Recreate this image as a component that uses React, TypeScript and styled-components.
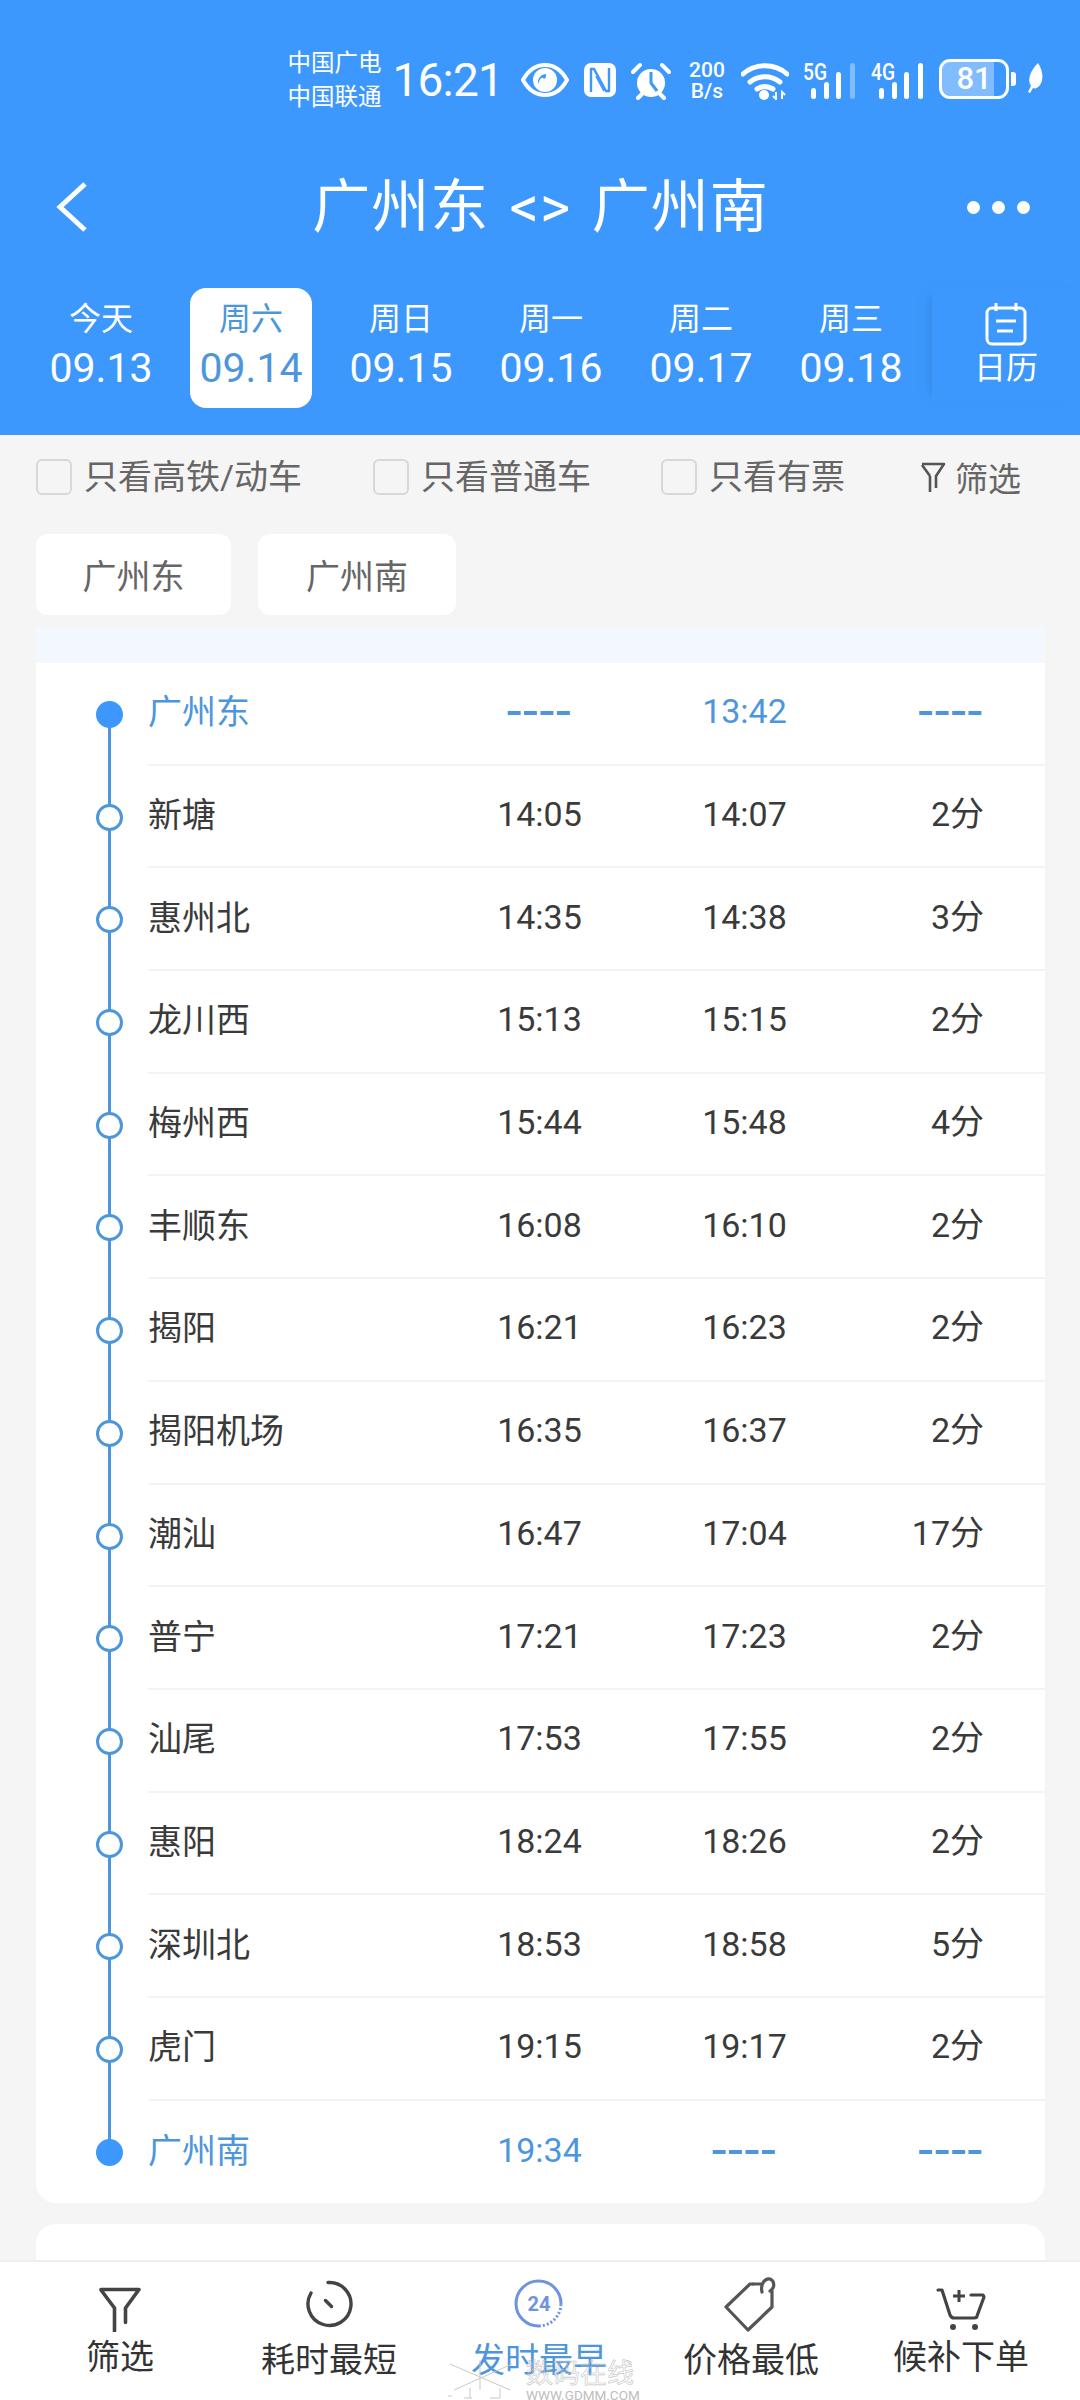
import React from "react";
import styled, { createGlobalStyle } from "styled-components";

const FONT = `Roboto, "Noto Sans CJK SC", sans-serif`;
const BLUE = "#3d98fd";
const TEXT_BLUE = "#4d96dc";

const GlobalStyle = createGlobalStyle`
  html, body { margin: 0; padding: 0; background: #f5f5f5; }
  body { font-family: ${FONT}; }
`;

const days = [
  { label: "今天", date: "09.13" },
  { label: "周六", date: "09.14", active: true },
  { label: "周日", date: "09.15" },
  { label: "周一", date: "09.16" },
  { label: "周二", date: "09.17" },
  { label: "周三", date: "09.18" },
];

const stops = [
  ["广州东", "----", "13:42", "----"],
  ["新塘", "14:05", "14:07", "2分"],
  ["惠州北", "14:35", "14:38", "3分"],
  ["龙川西", "15:13", "15:15", "2分"],
  ["梅州西", "15:44", "15:48", "4分"],
  ["丰顺东", "16:08", "16:10", "2分"],
  ["揭阳", "16:21", "16:23", "2分"],
  ["揭阳机场", "16:35", "16:37", "2分"],
  ["潮汕", "16:47", "17:04", "17分"],
  ["普宁", "17:21", "17:23", "2分"],
  ["汕尾", "17:53", "17:55", "2分"],
  ["惠阳", "18:24", "18:26", "2分"],
  ["深圳北", "18:53", "18:58", "5分"],
  ["虎门", "19:15", "19:17", "2分"],
  ["广州南", "19:34", "----", "----"],
];

const EyeIcon = () => (
  <svg width="48" height="36" viewBox="0 0 48 36">
    <path d="M2 18C8 7 16 3 24 3s16 4 22 15c-6 11-14 15-22 15S8 29 2 18z" fill="none" stroke="#fff" strokeWidth="4" />
    <circle cx="24" cy="18" r="12" fill="#fff" />
    <path d="M17 22c2-5 3-7 5-6 2 2 3 0 3-4-4 0-9 4-8 10z" fill={BLUE} />
  </svg>
);

const NfcIcon = () => (
  <svg width="34" height="36" viewBox="0 0 34 36">
    <rect x="1" y="1" width="32" height="34" rx="7" fill="#fff" />
    <path d="M8 30V7h3l12 22h3V6" fill="none" stroke={BLUE} strokeWidth="2.4" />
    <path d="M13 14l8 15" fill="none" stroke={BLUE} strokeWidth="1.6" />
  </svg>
);

const AlarmIcon = () => (
  <svg width="40" height="38" viewBox="0 0 40 38">
    <circle cx="20" cy="21" r="14" fill="#fff" />
    <path d="M20 10v11l6 8" fill="none" stroke={BLUE} strokeWidth="3" />
    <path d="M2 10l7-7M38 10l-7-7M7 36l4-4M33 36l-4-4" stroke="#fff" strokeWidth="4" strokeLinecap="round" />
  </svg>
);

const WifiIcon = () => (
  <svg width="48" height="38" viewBox="0 0 48 38">
    <path d="M2 12C14 1 34 1 46 12M9 20c9-7 21-7 30 0M16 27c5-3 11-3 16 0" fill="none" stroke="#fff" strokeWidth="5" strokeLinecap="round" />
    <circle cx="23" cy="33" r="5" fill="#fff" />
    <path d="M35 30v7l-3-3M41 37v-7l3 3" fill="none" stroke="#fff" strokeWidth="2" />
  </svg>
);

const SignalIcon = ({ net, dim }: { net: string; dim?: boolean }) => (
  <svg width="54" height="38" viewBox="0 0 54 38" overflow="visible">
    <text x="0" y="18" fontSize="24" fontWeight="500" fill="#fff" fontFamily="Roboto, sans-serif" textLength="24" lengthAdjust="spacingAndGlyphs">{net}</text>
    <rect x="8" y="26" width="5" height="11" rx="2.5" fill="#fff" />
    <rect x="21" y="20" width="5" height="17" rx="2.5" fill="#fff" />
    <rect x="33" y="10" width="5" height="27" rx="2.5" fill="#fff" />
    <rect x="47" y="1" width="5" height="36" rx="2.5" fill="#fff" opacity={dim ? 0.35 : 1} />
  </svg>
);

const LeafIcon = () => (
  <svg width="18" height="32" viewBox="0 0 18 32">
    <path d="M12 1c5 8 6 16 2 22-2 3-5 4-7 3l-3 5-2-1 3-6C1 18 4 9 12 1z" fill="#fff" />
  </svg>
);

const BackIcon = () => (
  <svg width="34" height="50" viewBox="0 0 34 50">
    <path d="M30 2L5 25l25 23" fill="none" stroke="#fff" strokeWidth="5" />
  </svg>
);

const CalendarIcon = () => (
  <svg width="44" height="44" viewBox="0 0 44 44">
    <rect x="3" y="6" width="38" height="36" rx="5" fill="none" stroke="#fff" strokeWidth="3" />
    <path d="M12 1v8M32 1v8M12 19h20M13 29h16" stroke="#fff" strokeWidth="3" fill="none" />
  </svg>
);

const FunnelSmall = () => (
  <svg width="26" height="32" viewBox="0 0 26 32">
    <path d="M2 3h22L16 15v12M10 15L2 4M10 15v16" fill="none" stroke="#555" strokeWidth="2.6" strokeLinejoin="round" />
  </svg>
);

const FilterTabIcon = () => (
  <svg width="56" height="56" viewBox="0 0 56 56">
    <path d="M9 13.5h38L33.5 32v14.5M22.5 32L9 14M22.5 32v23" fill="none" stroke="#444" strokeWidth="3.6" strokeLinejoin="round" strokeLinecap="round" />
  </svg>
);

const TimerIcon = () => (
  <svg width="56" height="56" viewBox="0 0 56 56">
    <path d="M27 6.5A21.5 21.5 0 1 1 10 17" fill="none" stroke="#444" strokeWidth="3.4" strokeLinecap="round" />
    <path d="M24.5 24.5l6 6" stroke="#444" strokeWidth="3.4" strokeLinecap="round" />
  </svg>
);

const ClockTabIcon = () => (
  <svg width="56" height="56" viewBox="0 0 56 56">
    <path d="M50 28A22.5 22.5 0 1 0 28 50" fill="none" stroke="#6f93de" strokeWidth="3" />
    <path d="M28 50A22.5 22.5 0 0 0 50 28" fill="none" stroke="#6f93de" strokeWidth="3" strokeDasharray="2 2" />
    <text x="28" y="35" textAnchor="middle" fontSize="20" fontWeight="700" fill="#6f93de" fontFamily="Roboto, sans-serif">24</text>
  </svg>
);

const TagIcon = () => (
  <svg width="56" height="56" viewBox="0 0 56 56">
    <path d="M30 8H27L3 31l22 23 24-23V15" fill="none" stroke="#555" strokeWidth="3.2" strokeLinejoin="round" strokeLinecap="round" />
    <path d="M30 8h9M39 16c-2-8 3-14 8-13 5 2 5 9 0 12" fill="none" stroke="#555" strokeWidth="3.2" strokeLinecap="round" />
  </svg>
);

const CartIcon = () => (
  <svg width="56" height="56" viewBox="0 0 56 56">
    <path d="M5 14h4l8 25c1 2 2 3 4 3h20c2 0 3-1 3-2l7-19-1-2H38" fill="none" stroke="#444" strokeWidth="3.2" strokeLinecap="round" strokeLinejoin="round" />
    <path d="M20 20h12M26 14v12" stroke="#444" strokeWidth="3" />
    <circle cx="20" cy="51" r="3" fill="#444" />
    <circle cx="42" cy="51" r="3" fill="#444" />
  </svg>
);

const WatermarkLogo = () => (
  <svg width="72" height="40" viewBox="0 0 72 40">
    <path d="M4 4l60 26M66 4L8 30M34 0v30M2 36h4M18 38h8M44 38h10M24 28v10M54 28v10" fill="none" stroke="#c9c9c9" strokeWidth="1" />
  </svg>
);

const tabs = [
  { label: "筛选", icon: <FilterTabIcon />, up: true },
  { label: "耗时最短", icon: <TimerIcon /> },
  { label: "发时最早", icon: <ClockTabIcon />, active: true },
  { label: "价格最低", icon: <TagIcon /> },
  { label: "候补下单", icon: <CartIcon />, up: true },
];

export default function App() {
  return (
    <Page>
      <GlobalStyle />
      <Header>
        <StatusBar>
          <Carrier>
            <span>中国广电</span>
            <span>中国联通</span>
          </Carrier>
          <Clock>16:21</Clock>
          <EyeIcon />
          <NfcIcon />
          <AlarmIcon />
          <NetSpeed>
            <span>200</span>
            <span>B/s</span>
          </NetSpeed>
          <WifiIcon />
          <SignalIcon net="5G" dim />
          <SignalIcon net="4G" />
          <Battery>
            <BatteryBody>81</BatteryBody>
            <BatteryNub />
          </Battery>
          <LeafIcon />
        </StatusBar>
        <TitleBar>
          <BackIcon />
          <Title>广州东 &lt;&gt; 广州南</Title>
          <MoreDots>
            <i />
            <i />
            <i />
          </MoreDots>
        </TitleBar>
        <DateStrip>
          {days.map((d) => (
            <DayCell key={d.date}>
              <DayChip $active={d.active}>
                <DayLabel>{d.label}</DayLabel>
                <DayDate>{d.date}</DayDate>
              </DayChip>
            </DayCell>
          ))}
          <CalendarCell>
            <CalendarIcon />
            <DayLabel>日历</DayLabel>
          </CalendarCell>
        </DateStrip>
      </Header>

      <FilterRow>
        <FilterItem $width={337}>
          <CheckBox />
          只看高铁/动车
        </FilterItem>
        <FilterItem $width={288}>
          <CheckBox />
          只看普通车
        </FilterItem>
        <FilterItem $width={259}>
          <CheckBox />
          只看有票
        </FilterItem>
        <FilterLink>
          <FunnelSmall />
          筛选
        </FilterLink>
      </FilterRow>

      <StationTabs>
        <StationTab $width={195}>广州东</StationTab>
        <StationTab $width={198}>广州南</StationTab>
      </StationTabs>

      <StopsCard>
        <CardStrip />
        {stops.map((s, i) => {
          const end = i === 0 || i === stops.length - 1;
          return (
            <StopRow key={s[0]}>
              <Rail $first={i === 0} $last={i === stops.length - 1}>
                <Dot $filled={end} />
              </Rail>
              <StopBody $last={i === stops.length - 1} $end={end}>
                <StopName>{s[0]}</StopName>
                <StopCell $dash={s[1] === "----"}>{s[1]}</StopCell>
                <StopCell $dash={s[2] === "----"}>{s[2]}</StopCell>
                <StayCell $dash={s[3] === "----"}>{s[3]}</StayCell>
              </StopBody>
            </StopRow>
          );
        })}
      </StopsCard>

      <NextCard />

      <BottomBar>
        {tabs.map((t) => (
          <BottomTab key={t.label} $active={t.active} $up={t.up}>
            {t.icon}
            <span>{t.label}</span>
          </BottomTab>
        ))}
        <Watermark>
          <WatermarkLogo />
          <WatermarkText>
            <b>数码在线</b>
            <small>WWW.GDMM.COM</small>
          </WatermarkText>
        </Watermark>
      </BottomBar>
    </Page>
  );
}

const Page = styled.div`
  width: 1080px;
  height: 2400px;
  overflow: hidden;
  background: #f5f5f5;
  font-family: ${FONT};
`;

const Header = styled.header`
  height: 435px;
  background: ${BLUE};
  color: #fff;
  box-sizing: border-box;
`;

const StatusBar = styled.div`
  height: 134px;
  box-sizing: border-box;
  padding: 46px 36px 0 0;
  display: flex;
  justify-content: flex-end;
  align-items: flex-start;
  gap: 14px;
  svg { display: block; margin-top: 16px; }
`;

const Carrier = styled.div`
  display: flex;
  flex-direction: column;
  font-size: 23.5px;
  line-height: 34px;
  margin-right: -3px;
`;

const Clock = styled.div`
  font-size: 46px;
  line-height: 68px;
  font-weight: 400;
  letter-spacing: -0.8px;
  margin-right: 4px;
`;

const NetSpeed = styled.div`
  display: flex;
  flex-direction: column;
  align-items: center;
  font-size: 21px;
  line-height: 21px;
  font-weight: 500;
  margin: 14px 0 0 2px;
  width: 40px;
`;

const Battery = styled.div`
  display: flex;
  align-items: center;
  gap: 2px;
  margin: 13px -4px 0 0;
`;

const BatteryBody = styled.div`
  width: 70px;
  height: 40px;
  box-sizing: border-box;
  border: 3px solid #fff;
  border-radius: 11px;
  font-size: 31px;
  line-height: 34px;
  font-weight: 500;
  text-align: center;
  background: linear-gradient(90deg, rgba(255, 255, 255, 0.35) 81%, transparent 81%);
`;

const BatteryNub = styled.div`
  width: 5px;
  height: 14px;
  border-radius: 0 3px 3px 0;
  background: #fff;
`;

const TitleBar = styled.div`
  height: 146px;
  box-sizing: border-box;
  padding: 0 50px 0 55px;
  display: flex;
  align-items: center;
  justify-content: space-between;
  svg { display: block; }
`;

const Title = styled.h1`
  margin: 0 0 0 25px;
  font-size: 58px;
  font-weight: 400;
  line-height: 70px;
  letter-spacing: 1px;
  word-spacing: 5px;
  white-space: pre;
`;

const MoreDots = styled.div`
  display: flex;
  gap: 12px;
  i {
    width: 13px;
    height: 13px;
    border-radius: 50%;
    background: #fff;
  }
`;

const DateStrip = styled.div`
  height: 120px;
  margin-top: 8px;
  padding-left: 26px;
  display: flex;
`;

const DayCell = styled.div`
  width: 150px;
  flex-shrink: 0;
  display: flex;
  justify-content: center;
`;

const DayChip = styled.div<{ $active?: boolean }>`
  width: 122px;
  height: 120px;
  box-sizing: border-box;
  padding-top: 11px;
  border-radius: 16px;
  display: flex;
  flex-direction: column;
  align-items: center;
  background: ${(p) => (p.$active ? "#fff" : "transparent")};
  color: ${(p) => (p.$active ? "#4d96dc" : "#fff")};
`;

const DayLabel = styled.div`
  font-size: 32px;
  line-height: 40px;
`;

const DayDate = styled.div`
  font-size: 41px;
  font-weight: 450;
  line-height: 52px;
  margin-top: 3px;
`;

const CalendarCell = styled.div`
  width: 148px;
  flex-shrink: 0;
  margin-left: 6px;
  height: 100px;
  display: flex;
  flex-direction: column;
  align-items: center;
  padding-top: 14px;
  box-shadow: -8px 0 10px -8px rgba(40, 110, 200, 0.5);
  svg { display: block; margin-bottom: 2px; }
`;

const FilterRow = styled.div`
  height: 83px;
  box-sizing: border-box;
  padding: 0 0 0 36px;
  display: flex;
  align-items: center;
`;

const FilterItem = styled.div<{ $width: number }>`
  width: ${(p) => p.$width}px;
  display: flex;
  align-items: center;
  gap: 12px;
  font-size: 34px;
  line-height: 44px;
  color: #666;
  flex-shrink: 0;
`;

const CheckBox = styled.span`
  width: 36px;
  height: 36px;
  box-sizing: border-box;
  border: 2px solid #d8d8d8;
  border-radius: 6px;
  flex-shrink: 0;
`;

const FilterLink = styled.div`
  display: flex;
  align-items: center;
  gap: 9px;
  font-size: 33px;
  color: #666;
  svg { display: block; }
`;

const StationTabs = styled.div`
  display: flex;
  gap: 27px;
  padding: 16px 36px 0;
`;

const StationTab = styled.div<{ $width: number }>`
  width: ${(p) => p.$width}px;
  height: 81px;
  background: #fff;
  border-radius: 12px;
  display: flex;
  align-items: center;
  justify-content: center;
  font-size: 34px;
  color: #666;
`;

const StopsCard = styled.section`
  margin: 12px 35px 0 36px;
  background: #fff;
  border-radius: 0 0 20px 20px;
  overflow: hidden;
`;

const CardStrip = styled.div`
  height: 36px;
  background: #f3f8fe;
`;

const StopRow = styled.div`
  height: 102.7px;
  display: flex;
`;

const Rail = styled.div<{ $first?: boolean; $last?: boolean }>`
  width: 112px;
  flex-shrink: 0;
  position: relative;
  &::before {
    content: "";
    position: absolute;
    left: 71.5px;
    width: 3px;
    background: ${TEXT_BLUE};
    top: ${(p) => (p.$first ? "50px" : "0")};
    bottom: ${(p) => (p.$last ? "52px" : "0")};
  }
`;

const Dot = styled.span<{ $filled?: boolean }>`
  position: absolute;
  left: 59.5px;
  top: 38px;
  width: 27px;
  height: 27px;
  box-sizing: border-box;
  border-radius: 50%;
  border: 3px solid ${(p) => (p.$filled ? BLUE : TEXT_BLUE)};
  background: ${(p) => (p.$filled ? BLUE : "#fff")};
`;

const StopBody = styled.div<{ $last?: boolean; $end?: boolean }>`
  flex: 1;
  display: grid;
  grid-template-columns: 289px 205px 205px 198px;
  align-items: center;
  box-sizing: border-box;
  border-bottom: ${(p) => (p.$last ? "none" : "2px solid #f3f3f3")};
  padding-bottom: 4px;
  color: ${(p) => (p.$end ? TEXT_BLUE : "#3a3a3a")};
`;

const StopName = styled.div`
  font-size: 34px;
  padding-bottom: 3px;
`;

const StopCell = styled.div<{ $dash?: boolean }>`
  text-align: center;
  font-size: ${(p) => (p.$dash ? "54px" : "34px")};
  letter-spacing: ${(p) => (p.$dash ? "1.5px" : "0")};
  line-height: 44px;
`;

const StayCell = styled(StopCell)`
  text-align: right;
  padding-right: 61px;
`;

const NextCard = styled.div`
  margin: 21px 35px 0 36px;
  height: 36px;
  background: #fff;
  border-radius: 20px 20px 0 0;
`;

const BottomBar = styled.nav`
  height: 140px;
  box-sizing: border-box;
  background: #fff;
  border-top: 2px solid #eeeeee;
  padding-top: 14px;
  display: grid;
  grid-template-columns: 240px 178px 242px 182px 238px;
  position: relative;
`;

const BottomTab = styled.div<{ $active?: boolean; $up?: boolean }>`
  display: flex;
  flex-direction: column;
  align-items: center;
  color: ${(p) => (p.$active ? "#4d96dc" : "#333")};
  font-size: 34px;
  line-height: 42px;
  svg { display: block; flex-shrink: 0; }
  span { margin-top: ${(p) => (p.$up ? "4px" : "7px")}; white-space: nowrap; }
`;

const Watermark = styled.div`
  position: absolute;
  left: 446px;
  top: 98px;
  display: flex;
  gap: 8px;
  pointer-events: none;
`;

const WatermarkText = styled.div`
  display: flex;
  flex-direction: column;
  align-items: flex-start;
  b {
    font-size: 27px;
    line-height: 28px;
    font-weight: 400;
    color: transparent;
    -webkit-text-stroke: 0.6px #c4c4c4;
  }
  small {
    font-size: 13.5px;
    line-height: 14px;
    color: #bdbdbd;
  }
`;
